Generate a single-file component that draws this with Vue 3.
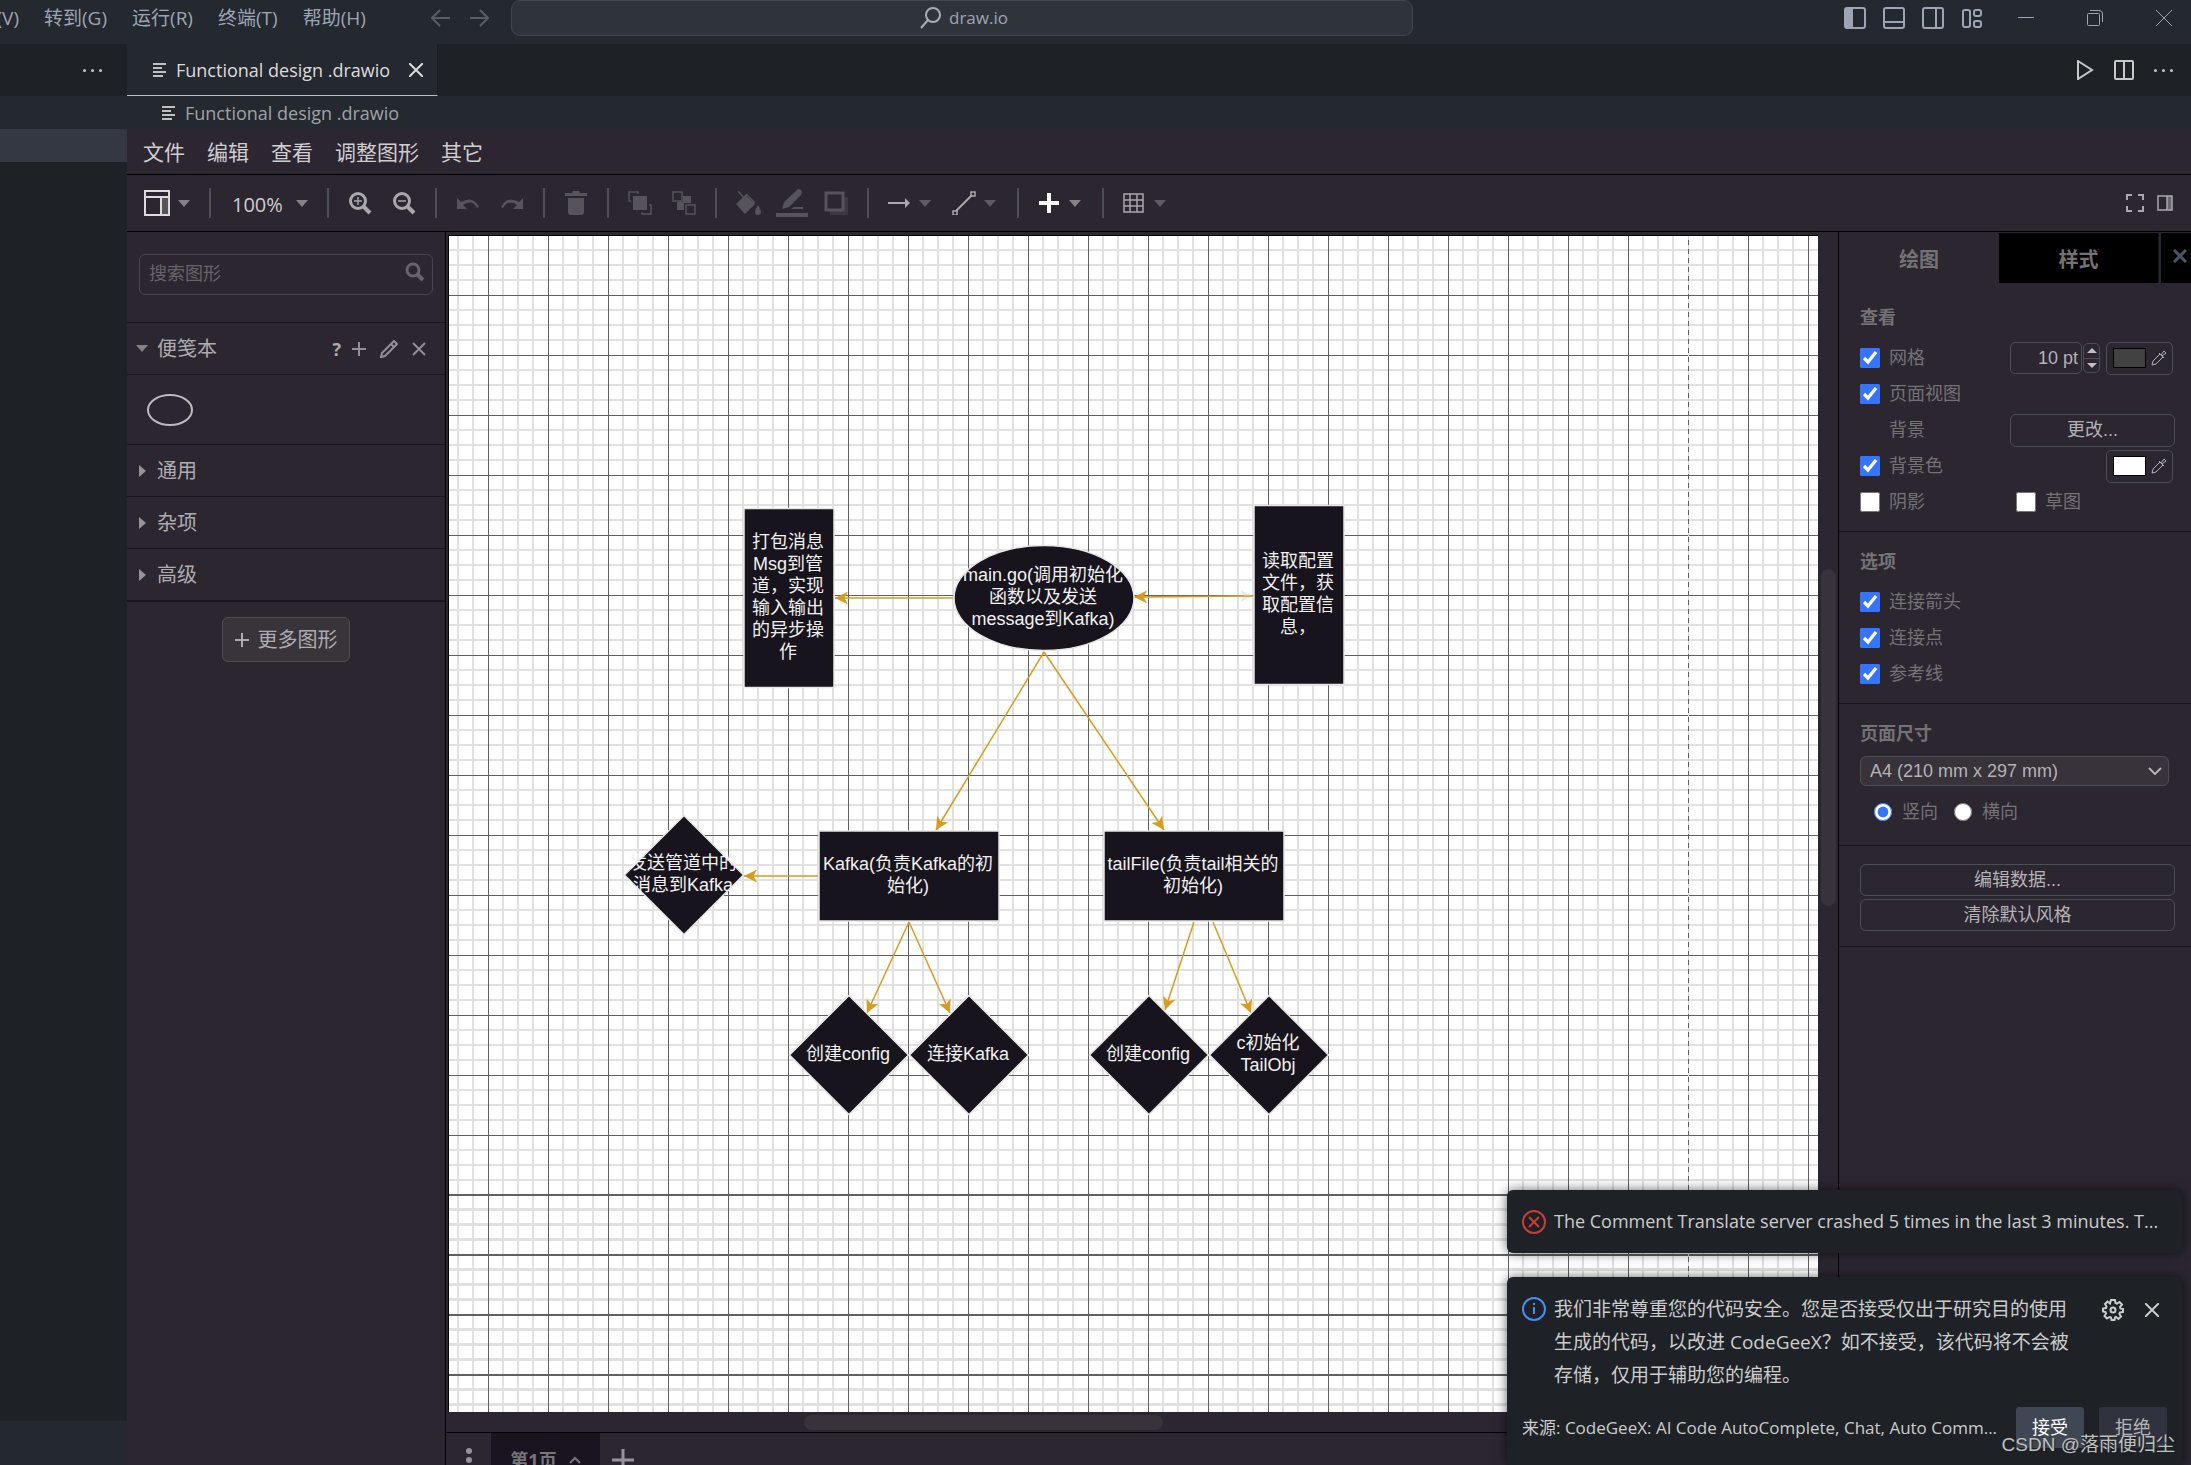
<script setup>
import { ref } from 'vue'

const menus = ['转到(G)', '运行(R)', '终端(T)', '帮助(H)']
const drawMenus = ['文件', '编辑', '查看', '调整图形', '其它']
const palettes = ['通用', '杂项', '高级']
const options = ref([
  { id: 'opt-arrows', label: '连接箭头', on: true },
  { id: 'opt-points', label: '连接点', on: true },
  { id: 'opt-guides', label: '参考线', on: true }
])
const grid = ref(true)
const pageView = ref(true)
const background = ref(true)
const shadow = ref(false)
const sketch = ref(false)
const orientation = ref('portrait')
const gridSize = ref('10 pt')

// Node centres and sizes in canvas coordinates
const nodes = [
  { kind: 'rect', x: 340, y: 362, w: 90, h: 179, lines: ['打包消息', 'Msg到管', '道，实现', '输入输出', '的异步操', '作'] },
  { kind: 'ellipse', x: 595, y: 362, w: 180, h: 105, lines: ['main.go(调用初始化', '函数以及发送', 'message到Kafka)'] },
  { kind: 'rect', x: 850, y: 359, w: 90, h: 179, lines: ['读取配置', '文件，获', '取配置信', '息，'] },
  { kind: 'diamond', x: 235, y: 639, w: 119, h: 119, lines: ['发送管道中的', '消息到Kafka'] },
  { kind: 'rect', x: 460, y: 640, w: 180, h: 90, lines: ['Kafka(负责Kafka的初', '始化)'] },
  { kind: 'rect', x: 745, y: 640, w: 180, h: 90, lines: ['tailFile(负责tail相关的', '初始化)'] },
  { kind: 'diamond', x: 400, y: 819, w: 119, h: 119, lines: ['创建config'] },
  { kind: 'diamond', x: 520, y: 819, w: 119, h: 119, lines: ['连接Kafka'] },
  { kind: 'diamond', x: 700, y: 819, w: 119, h: 119, lines: ['创建config'] },
  { kind: 'diamond', x: 820, y: 819, w: 119, h: 119, lines: ['c初始化', 'TailObj'] }
]
const edges = [
  [504, 362, 386, 362],
  [804, 360, 685, 361],
  [595, 416, 487, 594],
  [595, 416, 715, 594],
  [369, 640, 295, 640],
  [460, 686, 418, 777],
  [460, 686, 501, 777],
  [745, 686, 716, 774],
  [764, 686, 802, 777]
]
const diamond = n =>
  `${n.x},${n.y - n.h / 2} ${n.x + n.w / 2},${n.y} ${n.x},${n.y + n.h / 2} ${n.x - n.w / 2},${n.y}`
</script>

<template>
  <div class="window">
    <header class="titlebar">
      <nav class="menubar">
        <button class="cut">(V)</button>
        <button v-for="m in menus" :key="m">{{ m }}</button>
      </nav>
      <div class="history">
        <button aria-label="后退"><svg width="20" height="20" viewBox="0 0 20 20"><path d="M19 10H2M9 2L1 10l8 8" /></svg></button>
        <button aria-label="前进"><svg width="20" height="20" viewBox="0 0 20 20"><path d="M1 10h17M11 2l8 8-8 8" /></svg></button>
      </div>
      <button class="command">
        <svg width="22" height="22" viewBox="0 0 22 22"><circle cx="13" cy="8" r="7" /><path d="M8 13L1 21" /></svg>
        <span>draw.io</span>
      </button>
      <div class="winicons">
        <button aria-label="侧栏"><svg width="22" height="22" viewBox="0 0 22 22"><rect x="1" y="1" width="20" height="20" rx="2" /><path class="solid" d="M1 1h8v20H1z" /></svg></button>
        <button aria-label="面板"><svg width="22" height="22" viewBox="0 0 22 22"><rect x="1" y="1" width="20" height="20" rx="2" /><path d="M1 15h20" /></svg></button>
        <button aria-label="辅助栏"><svg width="22" height="22" viewBox="0 0 22 22"><rect x="1" y="1" width="20" height="20" rx="2" /><path d="M14 1v20" /></svg></button>
        <button aria-label="布局"><svg width="22" height="22" viewBox="0 0 22 22"><rect x="2" y="3" width="7" height="17" rx="2" /><rect x="13" y="3" width="7" height="6" rx="2" /><rect x="13" y="14" width="7" height="6" rx="2" /></svg></button>
      </div>
      <div class="wincontrols">
        <button aria-label="最小化"><svg width="16" height="16" viewBox="0 0 16 16"><path d="M0 7.500h16" /></svg></button>
        <button aria-label="还原"><svg width="16" height="16" viewBox="0 0 16 16"><rect x=".5" y="3.500" width="12" height="12" rx="1" /><path d="M3 .5h9q3.500 0 3.500 3.500v8" /></svg></button>
        <button aria-label="关闭"><svg width="16" height="16" viewBox="0 0 16 16"><path d="M0 0l16 16M16 0L0 16" /></svg></button>
      </div>
    </header>

    <div class="workbench">
      <aside class="explorer">
        <div class="explorer-head"><button class="dots" aria-label="更多"><i></i><i></i><i></i></button></div>
        <div class="explorer-row"></div>
        <div class="explorer-row selected"></div>
        <div class="explorer-body"></div>
        <div class="explorer-foot"></div>
      </aside>

      <main class="editor">
        <div class="tabs">
          <div class="tab">
            <svg class="lines" width="14" height="14" viewBox="0 0 14 14"><path d="M0 1h13M0 5h9M0 9h13M0 13h10" /></svg>
            <span>Functional design .drawio</span>
            <button aria-label="关闭标签"><svg width="14" height="14" viewBox="0 0 14 14"><path d="M0 0l14 14M14 0L0 14" /></svg></button>
          </div>
          <div class="tab-actions">
            <button aria-label="运行"><svg width="18" height="20" viewBox="0 0 18 20"><path d="M2 1l14 9-14 9z" /></svg></button>
            <button aria-label="拆分"><svg width="20" height="20" viewBox="0 0 20 20"><rect x="1" y="1" width="18" height="18" rx="1" /><path d="M10 1v18" /></svg></button>
            <button class="dots" aria-label="更多操作"><i></i><i></i><i></i></button>
          </div>
        </div>
        <div class="crumbs">
          <svg class="lines" width="14" height="14" viewBox="0 0 14 14"><path d="M0 1h13M0 5h9M0 9h13M0 13h10" /></svg>
          <span>Functional design .drawio</span>
        </div>

        <nav class="draw-menu"><button v-for="m in drawMenus" :key="m">{{ m }}</button></nav>

        <div class="toolbar">
          <button class="drop light" aria-label="视图">
            <svg width="26" height="26" viewBox="0 0 26 26"><path d="M17 8h8v17h-8z" fill="#555" stroke="none" /><path d="M1 1h24v24H1zM1 7h24M17 7v18" stroke-width="2" /></svg><b class="tri"></b>
          </button>
          <i class="sep"></i>
          <button class="zoom"><span>100%</span><b class="tri"></b></button>
          <i class="sep"></i>
          <button class="cell bright" aria-label="放大"><svg width="24" height="24" viewBox="0 0 24 24" stroke-width="3"><circle cx="10" cy="10" r="7.500" /><path d="M15 15l7 7" stroke-width="4" /><path d="M6 10h8M10 6v8" stroke-width="1.500" /></svg></button>
          <button class="cell bright" aria-label="缩小"><svg width="24" height="24" viewBox="0 0 24 24" stroke-width="3"><circle cx="10" cy="10" r="7.500" /><path d="M15 15l7 7" stroke-width="4" /><path d="M6 10h8" stroke-width="1.500" /></svg></button>
          <i class="sep"></i>
          <button class="cell dim" aria-label="撤销"><svg width="24" height="24" viewBox="0 0 24 24"><path class="fill" d="M1 7v11h10L7 14q9-6 14 3l2-1Q17 4 5 11z" /></svg></button>
          <button class="cell dim" aria-label="重做"><svg width="24" height="24" viewBox="0 0 24 24"><path class="fill" d="M23 7v11H13l4-4q-9-6-14 3l-2-1Q7 4 19 11z" /></svg></button>
          <i class="sep"></i>
          <button class="cell dim" aria-label="删除"><svg width="24" height="24" viewBox="0 0 24 24"><path class="fill" d="M1 2h7l1-2h6l1 2h7v3H1zM4 7h16v14q0 3-3 3H7q-3 0-3-3z" /></svg></button>
          <i class="sep"></i>
          <button class="cell dim" aria-label="置于顶层"><svg width="24" height="24" viewBox="0 0 24 24"><path class="fill" d="M5 5h14v14H5z" /><path d="M3 10H1V1h9v2M21 14h2v9h-9v-2" stroke-width="1.500" /></svg></button>
          <button class="cell dim" aria-label="置于底层"><svg width="24" height="24" viewBox="0 0 24 24"><path class="fill" d="M11 5h8v7h-7v7H5v-8h6z" /><path d="M1 1h9v9H1zM14 14h9v9h-9z" stroke-width="1.500" /></svg></button>
          <i class="sep"></i>
          <button class="cell dim" aria-label="填充"><svg width="26" height="24" viewBox="0 0 26 24"><path class="fill" d="M10 4l10 9-9 9q-1 1-2 0l-8-9zM23 14q3 5 3 7a3 3 0 0 1-6 0q0-2 3-7z" /><path d="M3 0l8 9v-5M11 3l9 9" stroke-width="1.500" /></svg></button>
          <button class="cell dim" aria-label="线条颜色"><svg width="32" height="28" viewBox="0 0 32 28"><path class="fill" d="M6 20l2-7L20 2l2-2q3 0 4 3l-1 3-12 12zM0 24h32v4H0zM15 20l3-2h9v2z" /></svg></button>
          <button class="cell dim" aria-label="阴影"><svg width="24" height="24" viewBox="0 0 24 24"><path class="fill" d="M6 6h18v18H6z" opacity=".4" /><rect x="2" y="2" width="17" height="17" fill="#2b2630" stroke-width="3" /></svg></button>
          <i class="sep"></i>
          <button class="drop" aria-label="连线"><svg width="24" height="24" viewBox="0 0 24 24"><path d="M1 12h18" stroke-width="2" /><path class="fill" d="M18 7l5 5-5 5z" /></svg><b class="tri low"></b></button>
          <button class="drop" aria-label="航点"><svg width="24" height="24" viewBox="0 0 24 24"><path d="M4 20L20 4" stroke-width="2" /><path d="M1 20h4v4H1zM19 1h4v4h-4z" stroke-width="1.500" /></svg><b class="tri low"></b></button>
          <i class="sep"></i>
          <button class="drop white" aria-label="插入"><svg width="24" height="24" viewBox="0 0 24 24" stroke-width="4"><path d="M2 12h20M12 2v20" /></svg><b class="tri"></b></button>
          <i class="sep"></i>
          <button class="drop" aria-label="表格"><svg width="24" height="24" viewBox="0 0 24 24" stroke-width="1.500"><path d="M2 3h19v18H2zM2 9h19M2 15h19M8 3v18M15 3v18" /></svg><b class="tri low"></b></button>
          <div class="toolbar-right">
            <button aria-label="全屏"><svg width="18" height="18" viewBox="0 0 18 18"><path d="M1 6V1h5M12 1h5v5M17 12v5h-5M6 17H1v-5" /></svg></button>
            <button aria-label="格式"><svg width="16" height="16" viewBox="0 0 16 16"><path class="fill" d="M10 1h5v14h-5z" opacity=".5" /><path d="M1 1h14v14H1zM10 1v14" stroke-width="1.500" /></svg></button>
          </div>
        </div>

        <div class="draw-body">
          <aside class="shapes">
            <div class="search">
              <input type="text" placeholder="搜索图形" aria-label="搜索图形" />
              <svg width="20" height="20" viewBox="0 0 20 20"><circle cx="8" cy="8" r="6" /><path d="M12 12l6 6" stroke-width="4" /></svg>
            </div>
            <div class="palette-head open">
              <b class="tri"></b><span>便笺本</span>
              <div class="palette-tools">
                <button class="help">?</button>
                <button aria-label="添加"><svg width="14" height="14" viewBox="0 0 14 14"><path d="M0 7h14M7 0v14" /></svg></button>
                <button aria-label="编辑"><svg width="18" height="18" viewBox="0 0 18 18"><path d="M1 17l1-4L14 1l3 3L5 16zM11 4l3 3" /></svg></button>
                <button aria-label="移除"><svg width="14" height="14" viewBox="0 0 14 14"><path d="M1 1l12 12M13 1L1 13" /></svg></button>
              </div>
            </div>
            <div class="scratch"><svg width="46" height="32" viewBox="0 0 46 32"><ellipse cx="23" cy="16" rx="22" ry="15" /></svg></div>
            <div v-for="p in palettes" :key="p" class="palette-head"><b class="tri-r"></b><span>{{ p }}</span></div>
            <div class="more-wrap"><button class="more"><svg width="14" height="14" viewBox="0 0 14 14"><path d="M0 7h14M7 0v14" /></svg><span>更多图形</span></button></div>
          </aside>

          <section class="center">
            <div class="stage">
              <div class="canvas">
                <svg class="drawing" width="100%" height="100%">
                  <defs>
                    <pattern id="grid-a" x="39" y="59" width="60" height="60" patternUnits="userSpaceOnUse" shape-rendering="crispEdges">
                      <path fill="#e1e1e1" d="M14 0h2v60h-2zM29 0h2v60h-2zM44 0h2v60h-2zM0 14h60v2H0zM0 29h60v2H0zM0 44h60v2H0z" />
                      <path fill="#606060" d="M0 0h60v1H0zM0 0h1v60H0z" />
                    </pattern>
                    <pattern id="grid-b" x="39" y="958" width="60" height="60" patternUnits="userSpaceOnUse" shape-rendering="crispEdges">
                      <path fill="#e1e1e1" d="M14 0h2v60h-2zM29 0h2v60h-2zM44 0h2v60h-2zM0 14h60v3H0zM0 29h60v3H0zM0 44h60v3H0z" />
                      <path fill="#606060" d="M0 0h60v2H0zM0 0h1v60H0z" />
                    </pattern>
                    <marker id="head" viewBox="0 0 13 13" refX="13" refY="6.500" markerWidth="13" markerHeight="13" markerUnits="userSpaceOnUse" orient="auto">
                      <path d="M13 6.500L0 0l3.500 6.500L0 13z" fill="#d79b1e" />
                    </marker>
                  </defs>
                  <rect width="100%" height="958" fill="url(#grid-a)" />
                  <rect y="958" width="100%" height="100%" fill="url(#grid-b)" />
                  <path d="M1239.500 0v2000" stroke="#d8d8d8" stroke-dasharray="4 5" />
                  <path d="M690 361.500L800 360" stroke="#e0e0e0" />
                  <path d="M804 360l-13-6 4 6-4 6z" fill="#e8e8e8" />
                  <path v-for="(e, i) in edges" :key="i" :d="`M${e[0]} ${e[1]}L${e[2]} ${e[3]}`" stroke="#d79b1e" stroke-width="1.500" marker-end="url(#head)" />
                  <g fill="#18141d" stroke="#e6e6e6" stroke-width="1.500">
                    <template v-for="(n, i) in nodes" :key="i">
                      <rect v-if="n.kind === 'rect'" :x="n.x - n.w / 2" :y="n.y - n.h / 2" :width="n.w" :height="n.h" />
                      <ellipse v-else-if="n.kind === 'ellipse'" :cx="n.x" :cy="n.y" :rx="n.w / 2" :ry="n.h / 2" />
                      <polygon v-else :points="diamond(n)" />
                    </template>
                  </g>
                </svg>
                <div v-for="(n, i) in nodes" :key="i" class="label" :style="{ left: n.x - 1 + 'px', top: n.y - 1 + 'px' }">
                  <div v-for="l in n.lines" :key="l">{{ l }}</div>
                </div>
              </div>
              <div class="vscroll"><div class="vthumb"></div></div>
            </div>
            <div class="hscroll"><div class="hthumb"></div></div>
            <footer class="pages">
              <button class="page-menu" aria-label="页面"><i></i><i></i><i></i></button>
              <button class="page"><span>第1页</span><svg width="12" height="8" viewBox="0 0 12 8"><path d="M1 7l5-5 5 5" /></svg></button>
              <button class="page-add" aria-label="添加页面"><svg width="22" height="22" viewBox="0 0 22 22"><path d="M0 11h22M11 0v22" /></svg></button>
            </footer>
          </section>

          <aside class="format">
            <div class="format-tabs">
              <button class="active">绘图</button>
              <button>样式</button>
              <button class="x" aria-label="关闭"><svg width="14" height="14" viewBox="0 0 14 14"><path d="M1 1l12 12M13 1L1 13" /></svg></button>
            </div>
            <section class="group">
              <h3>查看</h3>
              <div class="row">
                <input id="f-grid" v-model="grid" type="checkbox" /><label for="f-grid">网格</label>
                <div class="right">
                  <input v-model="gridSize" class="size" type="text" aria-label="网格大小" />
                  <div class="spin"><button aria-label="增大"><b class="up"></b></button><button aria-label="减小"><b class="down"></b></button></div>
                  <button class="color" aria-label="网格颜色"><i class="swatch grey"></i><svg width="16" height="16" viewBox="0 0 16 16"><path d="M1 15l1-4 7-7 3 3-7 7zM8 3l5 5M10 5l3-4 2 2-4 3" /></svg></button>
                </div>
              </div>
              <div class="row"><input id="f-page" v-model="pageView" type="checkbox" /><label for="f-page">页面视图</label></div>
              <div class="row"><span class="indent">背景</span><div class="right wide"><button class="change">更改...</button></div></div>
              <div class="row">
                <input id="f-bg" v-model="background" type="checkbox" /><label for="f-bg">背景色</label>
                <div class="right"><button class="color" aria-label="背景颜色"><i class="swatch"></i><svg width="16" height="16" viewBox="0 0 16 16"><path d="M1 15l1-4 7-7 3 3-7 7zM8 3l5 5M10 5l3-4 2 2-4 3" /></svg></button></div>
              </div>
              <div class="row">
                <div class="half"><input id="f-shadow" v-model="shadow" type="checkbox" /><label for="f-shadow">阴影</label></div>
                <input id="f-sketch" v-model="sketch" type="checkbox" /><label for="f-sketch">草图</label>
              </div>
            </section>
            <section class="group">
              <h3>选项</h3>
              <div v-for="o in options" :key="o.id" class="row"><input :id="o.id" v-model="o.on" type="checkbox" /><label :for="o.id">{{ o.label }}</label></div>
            </section>
            <section class="group">
              <h3><label for="f-size">页面尺寸</label></h3>
              <div class="select">
                <select id="f-size"><option>A4 (210 mm x 297 mm)</option></select>
                <svg width="14" height="8" viewBox="0 0 14 8"><path d="M1 1l6 6 6-6" /></svg>
              </div>
              <div class="row radios">
                <input id="f-port" v-model="orientation" type="radio" value="portrait" /><label for="f-port">竖向</label>
                <input id="f-land" v-model="orientation" type="radio" value="landscape" /><label for="f-land">横向</label>
              </div>
            </section>
            <section class="group actions">
              <button>编辑数据...</button>
              <button>清除默认风格</button>
            </section>
          </aside>
        </div>
      </main>
    </div>

    <div class="toasts">
      <div class="toast single">
        <svg class="err" width="24" height="24" viewBox="0 0 24 24"><circle cx="12" cy="12" r="11" /><path d="M7 7l10 10M17 7L7 17" /></svg>
        <p>The Comment Translate server crashed 5 times in the last 3 minutes. T...</p>
      </div>
      <div class="toast">
        <div class="toast-top">
          <svg class="info" width="24" height="24" viewBox="0 0 24 24"><circle cx="12" cy="12" r="11" /><path d="M12 10v7M12 6v2" /></svg>
          <p>我们非常尊重您的代码安全。您是否接受仅出于研究目的使用<br />生成的代码，以改进 CodeGeeX？如不接受，该代码将不会被<br />存储，仅用于辅助您的编程。</p>
          <div class="toast-tools">
            <button aria-label="设置"><svg width="22" height="22" viewBox="0 0 22 22"><path d="M9 1h4l.5 3 1.500.6L17.500 3 20 5.500 18 8l.5 1.500L21 10v3l-3 .5-.6 1.500L19 17.500 16.500 20 14 18l-1 .5-.5 2.500h-3L9 18.500 7.500 18 5 19.500 2.500 17 4 14.500 3.500 13 1 12.500v-3L4 9l.5-1.500L3 5l2.500-2.500L8 4.500z" /><circle cx="11" cy="11" r="2.500" /></svg></button>
            <button aria-label="关闭通知"><svg width="14" height="14" viewBox="0 0 14 14"><path d="M0 0l14 14M14 0L0 14" /></svg></button>
          </div>
        </div>
        <div class="toast-foot">
          <span>来源: CodeGeeX: AI Code AutoComplete, Chat, Auto Comm...</span>
          <button class="primary">接受</button>
          <button>拒绝</button>
        </div>
      </div>
    </div>
    <div class="watermark">CSDN @落雨便归尘</div>
  </div>
</template>

<style>
body { margin: 0; background: #1e2226; }
</style>

<style scoped>
* { box-sizing: border-box; }
.window {
  position: relative; display: flex; flex-direction: column; height: 100vh; overflow: hidden;
  background: #1e2226; color: #c8c8c8; font: 18px/24px "Open Sans", "Noto Sans CJK SC", sans-serif;
}
button { background: none; border: 0; padding: 0; margin: 0; color: inherit; font: inherit; display: flex; align-items: center; justify-content: center; white-space: nowrap; }
svg { fill: none; stroke: currentColor; flex: none; display: block; }
.fill, .solid { fill: currentColor; stroke: none; }
h3, p { margin: 0; }

.titlebar { display: flex; flex: none; height: 44px; padding-bottom: 8px; align-items: center; background: #24282f; color: #9da5b4; overflow: hidden; }
.menubar { display: flex; flex: none; gap: 25px; width: 431px; font-size: 19px; justify-content: flex-start; }
.menubar .cut { width: 19px; justify-content: flex-end; }
.history { display: flex; gap: 18px; width: 80px; flex: none; color: #595e66; }
.history svg { stroke-width: 2; }
.command { flex: 0 1 902px; height: 36px; gap: 7px; padding-left: 4px; background: #2f343a; border: 1px solid #42474f; border-radius: 9px; font-size: 17px; }
.command svg { stroke-width: 2; color: #a9aeb6; }
.winicons { display: flex; gap: 17px; margin-left: auto; }
.winicons svg { stroke-width: 2; }
.wincontrols { display: flex; gap: 53px; margin: 0 19px 0 35px; }

.workbench { display: flex; flex: 1; min-height: 0; }
.explorer { display: flex; flex-direction: column; width: 127px; flex: none; }
.explorer-head { height: 52px; display: flex; align-items: center; justify-content: flex-end; padding-right: 25px; flex: none; }
.explorer-row { height: 33px; flex: none; background: #24282f; }
.explorer-row.selected { background: #343842; }
.explorer-body { flex: 1; }
.explorer-foot { height: 44px; flex: none; background: #24282f; }
.dots { gap: 5px; height: 20px; }
.dots i { width: 3px; height: 3px; border-radius: 50%; background: #c8c8c8; }

.editor { display: flex; flex-direction: column; flex: 1; min-width: 0; }
.tabs { display: flex; flex: none; height: 52px; justify-content: space-between; }
.tab { display: flex; align-items: center; width: 311px; padding: 0 14px 0 26px; background: #24282f; border-bottom: 1px solid #b9bcc2; border-right: 1px solid #191c20; color: #dcdcdc; }
.tab span { margin-left: 9px; flex: 1; white-space: nowrap; }
.tab button svg { stroke-width: 2; }
.lines { stroke: #c0c0c0; stroke-width: 2; }
.tab-actions { display: flex; align-items: center; gap: 20px; padding-right: 18px; }
.tab-actions svg { stroke-width: 2; }
.crumbs { display: flex; flex: none; align-items: center; gap: 9px; height: 33px; padding-left: 35px; background: #24282f; color: #a0a2a5; }

.draw-menu { display: flex; flex: none; align-items: center; gap: 22px; height: 46px; padding: 0 16px; background: #2b2630; border-bottom: 1px solid #000; font-size: 21px; color: #cfcdd0; }
.toolbar { display: flex; flex: none; align-items: center; height: 57px; padding-left: 8px; background: #2b2630; border-bottom: 1px solid #000; color: #aaa8ab; }
.toolbar .cell { width: 44px; height: 30px; }
.toolbar .dim { color: #57535a; }
.toolbar .drop { width: 65px; height: 30px; padding-left: 9px; justify-content: flex-start; gap: 8px; }
.toolbar .light { color: #dddbde; }
.toolbar .white { color: #fff; }
.toolbar .zoom { width: 98px; padding-left: 12px; justify-content: flex-start; gap: 13px; color: #cfcdd0; font-size: 20px; }
.toolbar .zoom span { padding-top: 4px; }
.tri { border: 6px solid transparent; border-top: 7px solid #858286; border-bottom: 0; }
.tri.low { border-top-color: #5e5b61; }
.sep { width: 2px; height: 30px; margin: 0 9px; background: #4c5052; flex: none; }
.toolbar-right { display: flex; gap: 13px; margin-left: auto; padding-right: 18px; }
.toolbar-right svg { stroke-width: 2; }

.draw-body { display: flex; flex: 1; min-height: 0; background: #2b2630; }
.shapes { width: 319px; flex: none; border-right: 1px solid #000; color: #aeacaf; font-size: 20px; }
.search { position: relative; margin: 22px 12px 27px; height: 41px; }
.search input { width: 100%; height: 100%; padding: 0 40px 3px 9px; background: none; border: 1px solid #45484b; border-radius: 6px; font: inherit; font-size: 18px; color: #ccc; }
.search input::placeholder { color: #67646a; opacity: 1; }
.search svg { position: absolute; right: 8px; top: 8px; stroke: #666369; stroke-width: 3; }
.palette-head { display: flex; align-items: center; height: 52px; border-top: 1px solid #19141f; padding-left: 12px; gap: 11px; }
.palette-head.open { padding-left: 9px; gap: 9px; }
.tri-r { border: 6px solid transparent; border-left: 7px solid #969498; border-right: 0; }
.palette-tools { display: flex; align-items: center; margin-left: auto; padding-right: 19px; gap: 14px; }
.palette-tools svg { stroke-width: 2; color: #929094; }
.palette-tools .help { font-size: 18px; font-weight: 700; margin-right: -3px; }
.scratch { height: 70px; border-top: 1px solid #19141f; padding: 19px 20px; }
.scratch svg { stroke: #bcbabd; stroke-width: 2; }
.more-wrap { border-top: 2px solid #19141f; padding-top: 15px; display: flex; justify-content: center; }
.more { width: 128px; height: 45px; gap: 9px; background: #38343a; border: 1px solid #4a5052; border-radius: 6px; font-size: 20px; }
.more svg { stroke-width: 2; }

.center { display: flex; flex-direction: column; flex: 1; min-width: 0; }
.stage { display: flex; flex: 1; min-height: 0; padding: 3px 0 0 2px; }
.canvas { position: relative; flex: 1; min-width: 0; overflow: hidden; background: #fff; border: solid #000; border-width: 1px 0 0 1px; }
.drawing { stroke: none; }
.label { position: absolute; transform: translate(-50%, -50%); color: #f0f0f0; font: 18px/22px "Liberation Sans", "Noto Sans CJK SC", sans-serif; text-align: center; white-space: nowrap; }
.vscroll { width: 20px; flex: none; padding: 334px 2px 0 3px; }
.vthumb { height: 337px; border-radius: 8px; background: #38333a; }
.hscroll { height: 20px; flex: none; padding: 3px 0 2px 358px; }
.hthumb { width: 359px; height: 15px; border-radius: 8px; background: #38333a; }
.pages { display: flex; flex: none; height: 33px; border-top: 1px solid #000; color: #96939a; }
.page-menu { width: 45px; height: 54px; flex-direction: column; gap: 3px; }
.page-menu i { width: 6px; height: 6px; border-radius: 50%; background: #96939a; }
.page { width: 109px; height: 54px; gap: 12px; background: #19141f; color: #77757a; font-size: 18px; font-weight: 700; }
.page svg { stroke-width: 2; }
.page-add { width: 46px; height: 54px; }
.page-add svg { stroke-width: 3; }

.format { width: 353px; flex: none; border-left: 1px solid #000; color: #757276; font: 18px/24px "Liberation Sans", "Noto Sans CJK SC", sans-serif; }
.format-tabs { display: flex; gap: 0; height: 50px; margin: 1px 0 5px; }
.format-tabs button { width: 160px; font-size: 20px; font-weight: 700; background: #000; border-right: 1px solid #19141f; padding-top: 4px; }
.format-tabs .active { background: none; border: 0; width: 160px; }
.format-tabs .x { flex: 1; margin-left: 2px; padding: 0 0 4px 8px; color: #4a5668; border: 0; }
.format-tabs .x svg { stroke-width: 3; }
.group { padding: 12px 16px 11px 21px; border-bottom: 1px solid #19141f; }
.group h3 { height: 36px; margin-bottom: 4px; font-size: 18px; line-height: 36px; }
.row { display: flex; align-items: center; height: 36px; }
.row input[type="checkbox"] { width: 20px; height: 20px; margin: 0 9px 0 0; accent-color: #3574ff; flex: none; }
.row input[type="radio"] { width: 18px; height: 18px; margin: 0 10px 0 0; accent-color: #3574ff; }
.indent { margin-left: 29px; }
.half { display: flex; align-items: center; width: 156px; }
.right { display: flex; align-items: center; margin-left: auto; margin-right: 2px; }
.right.wide { margin-right: 0; }
.size { width: 72px; height: 32px; padding: 0 3px; text-align: right; background: none; border: 1px solid #4a5052; border-radius: 5px; color: #b4b2b5; font: inherit; }
.spin { display: flex; flex-direction: column; width: 17px; height: 30px; margin: 0 6px 0 1px; border: 1px solid #4a5052; border-radius: 5px; }
.spin button { flex: 1; }
.spin button + button { border-top: 1px solid #4a5052; }
.up, .down { border: 5px solid transparent; border-bottom: 5px solid #c0bec1; border-top: 0; }
.down { border-bottom: 0; border-top: 5px solid #c0bec1; }
.color { width: 67px; height: 33px; gap: 5px; border: 1px solid #4a5052; border-radius: 5px; color: #b4b2b5; }
.swatch { width: 33px; height: 20px; background: #fff; border: 1px solid #000; }
.swatch.grey { background: #424242; }
.change { width: 165px; height: 33px; border: 1px solid #4a5052; border-radius: 6px; color: #b4b2b5; }
.select { position: relative; width: 309px; }
.select select { width: 100%; height: 30px; padding: 0 9px; appearance: none; background: #38333a; border: 1px solid #4a5052; border-radius: 6px; color: #b4b2b5; font: inherit; display: block; }
.select svg { position: absolute; right: 7px; top: 11px; stroke: #b4b2b5; stroke-width: 2; }
.radios { margin-top: 8px; padding: 0 0 0 14px; }
.radios label { margin-right: 16px; }
.group:nth-of-type(3) { padding-bottom: 15px; }
.actions { display: flex; flex-direction: column; gap: 3px; padding: 18px 16px 15px 21px; }
.actions button { height: 32px; border: 1px solid #4a5052; border-radius: 6px; color: #b4b2b5; }

.toasts { position: absolute; right: 9px; bottom: 0; width: 675px; display: flex; flex-direction: column; gap: 24px; }
.toast { padding: 16px 15px 17px; background: #1e2226; border-radius: 6px 6px 0 0; box-shadow: 0 0 12px rgba(0, 0, 0, .6); color: #ccc; font-size: 19px; line-height: 33px; white-space: nowrap; }
.toast.single { display: flex; align-items: center; gap: 8px; height: 63px; padding: 0 15px; border-radius: 6px; font-size: 18px; }
.toast svg { stroke-width: 2; }
.toast .err { color: #c93c37; }
.toast .info { color: #4b8bf5; }
.toast-top { display: flex; gap: 8px; height: 99px; }
.toast-top p { flex: 1; }
.toast-top .info { margin-top: 4px; }
.toast-tools { display: flex; gap: 21px; height: 33px; align-items: center; padding-right: 8px; }
.toast-foot { display: flex; align-items: center; gap: 15px; margin-top: 15px; height: 41px; font-size: 17px; }
.toast-foot span { flex: 1; min-width: 0; }
.toast-foot button { flex: none; width: 68px; height: 41px; background: #30333d; border-radius: 3px; color: #b4b6ba; font-size: 18px; }
.toast-foot .primary { background: #404754; color: #fff; }
.watermark { position: absolute; right: 16px; bottom: 6px; font: 19px/28px "Liberation Sans", "Noto Sans CJK SC", sans-serif; color: #bfc0c2; text-shadow: 1px 1px 1px #222; }
</style>
